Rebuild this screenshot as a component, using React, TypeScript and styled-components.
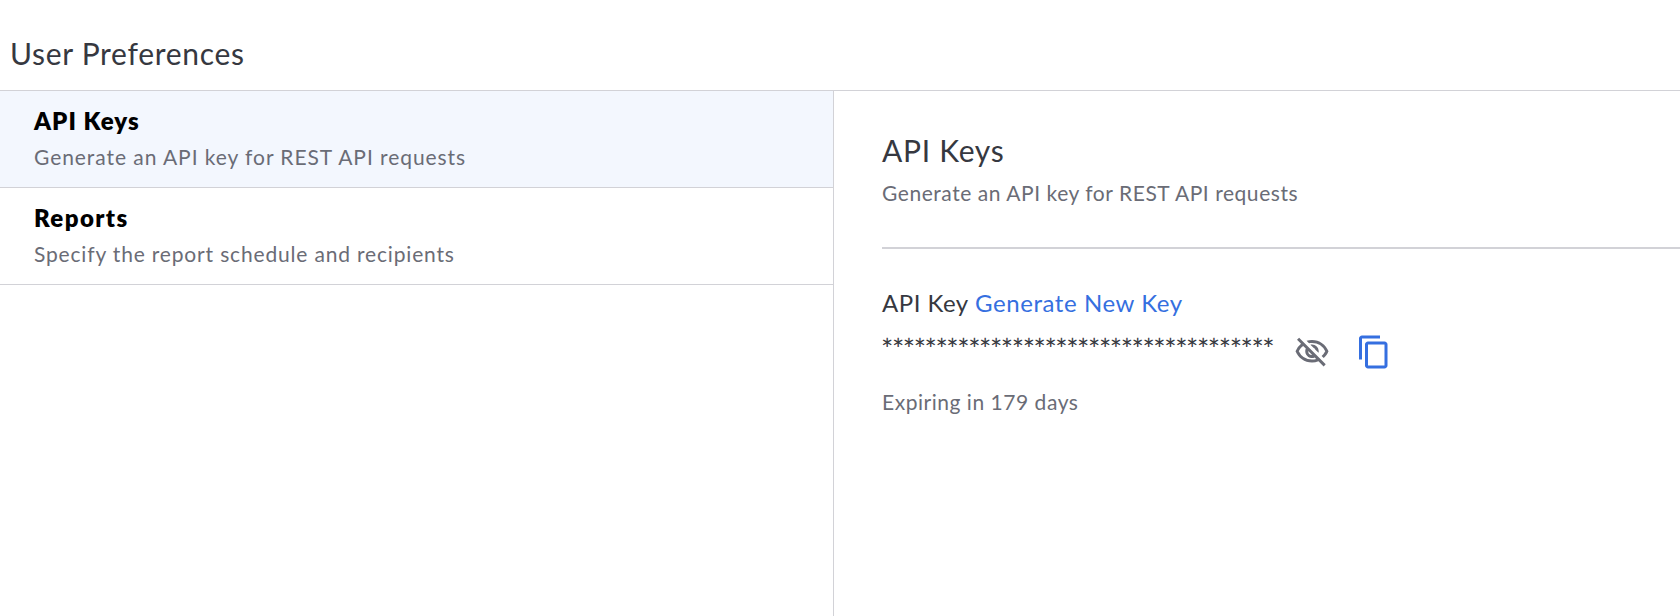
import React from "react";
import styled, { createGlobalStyle } from "styled-components";
import { MdContentCopy, MdOutlineVisibilityOff } from "react-icons/md";

const GlobalStyle = createGlobalStyle`
  * { box-sizing: border-box; }
  body { margin: 0; background: #fff; font-family: Lato, "Noto Sans", sans-serif; color: #363840; }
  h1, h2, h3, p { margin: 0; font-weight: 400; white-space: nowrap; }
`;

const Page = styled.div`
  height: 616px;
  display: flex;
  flex-direction: column;
  overflow: hidden;
`;

const Header = styled.header`
  height: 91px;
  padding: 33px 0 0 10px;
  border-bottom: 1px solid #d2d2d7;
`;

const Heading = styled.h1`
  font-size: 30px;
  line-height: 40px;
  letter-spacing: 0.7px;
`;

const Body = styled.main`
  flex: 1;
  display: flex;
`;

const Sidebar = styled.nav`
  width: 834px;
  border-right: 1px solid #d2d2d7;
`;

const Item = styled.div<{ $active?: boolean }>`
  height: 97px;
  padding: 14px 0 0 34px;
  border-bottom: 1px solid #d2d2d7;
  background: ${(p) => (p.$active ? "#f3f7fe" : "#fff")};
`;

const ItemTitle = styled.h3<{ $spacing: number }>`
  font-size: 24px;
  line-height: 32px;
  font-weight: 800;
  letter-spacing: ${(p) => p.$spacing}px;
  color: #000;
`;

const Description = styled.p<{ $spacing: number }>`
  font-size: 21px;
  line-height: 30px;
  letter-spacing: ${(p) => p.$spacing}px;
  color: #6a6c76;
`;

const ItemDescription = styled(Description)`
  margin-top: 5px;
`;

const Panel = styled.section`
  flex: 1;
  padding: 39px 0 0 48px;
`;

const PanelDescription = styled(Description)`
  margin-top: 8px;
`;

const Divider = styled.div`
  height: 2px;
  margin-top: 39px;
  background: #d2d2d7;
`;

const KeyLabel = styled.div`
  display: flex;
  margin-top: 37px;
  font-size: 24px;
  line-height: 34px;
  white-space: nowrap;
`;

const LabelText = styled.span`
  width: 93px;
  letter-spacing: 0.5px;
`;

const GenerateLink = styled.a`
  letter-spacing: 0.57px;
  color: #356fe0;
`;

const KeyRow = styled.div`
  display: flex;
  height: 67px;
`;

const MaskedKey = styled.span`
  width: 413px;
  margin-left: -1px;
  padding-top: 12px;
  font-size: 29px;
  line-height: 34px;
  letter-spacing: -1.43px;
`;

const IconButton = styled.span<{ $color: string }>`
  display: flex;
  width: 36px;
  height: 36px;
  margin: 14px 26px 0 0;
  font-size: 36px;
  color: ${(p) => p.$color};
`;

export default function App() {
  return (
    <Page>
      <GlobalStyle />
      <Header>
        <Heading>User Preferences</Heading>
      </Header>
      <Body>
        <Sidebar>
          <Item $active>
            <ItemTitle $spacing={1.05}>API Keys</ItemTitle>
            <ItemDescription $spacing={0.94}>Generate an API key for REST API requests</ItemDescription>
          </Item>
          <Item>
            <ItemTitle $spacing={1.4}>Reports</ItemTitle>
            <ItemDescription $spacing={0.83}>Specify the report schedule and recipients</ItemDescription>
          </Item>
        </Sidebar>
        <Panel>
          <Heading as="h2">API Keys</Heading>
          <PanelDescription $spacing={0.55}>Generate an API key for REST API requests</PanelDescription>
          <Divider />
          <KeyLabel>
            <LabelText>API Key</LabelText>
            <GenerateLink>Generate New Key</GenerateLink>
          </KeyLabel>
          <KeyRow>
            <MaskedKey>{"*".repeat(36)}</MaskedKey>
            <IconButton $color="#6a6c76"><MdOutlineVisibilityOff /></IconButton>
            <IconButton $color="#356fe0"><MdContentCopy /></IconButton>
          </KeyRow>
          <Description $spacing={0.53}>Expiring in 179 days</Description>
        </Panel>
      </Body>
    </Page>
  );
}
